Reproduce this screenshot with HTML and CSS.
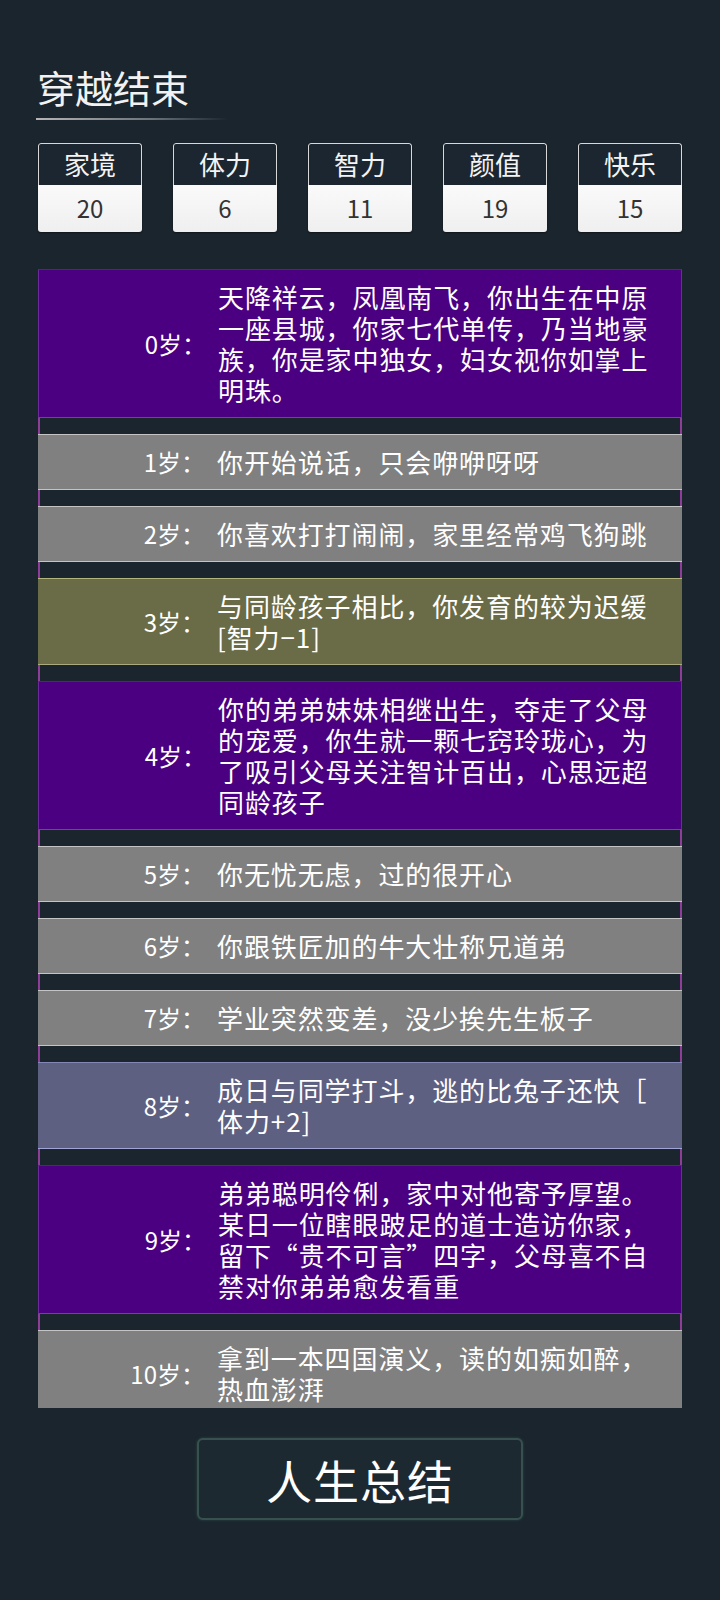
FILE: index.html
```html
<!DOCTYPE html>
<html lang="zh-CN">
<head>
    <meta charset="UTF-8">
    <meta name="viewport" content="width=device-width, initial-scale=1.0">
    <title>穿越结束</title>
    <link rel="stylesheet" href="styles.css">
</head>
<body>
    <div class="page">
        <div class="title">
            <h1>穿越结束</h1>
            <div class="title-line"></div>
        </div>

        <div class="stats">
            <div class="stat">
                <div class="stat-name">家境</div>
                <div class="stat-value">20</div>
            </div>
            <div class="stat">
                <div class="stat-name">体力</div>
                <div class="stat-value">6</div>
            </div>
            <div class="stat">
                <div class="stat-name">智力</div>
                <div class="stat-value">11</div>
            </div>
            <div class="stat">
                <div class="stat-name">颜值</div>
                <div class="stat-value">19</div>
            </div>
            <div class="stat">
                <div class="stat-name">快乐</div>
                <div class="stat-value">15</div>
            </div>
        </div>

        <ul class="events">
            <li class="event grade-rare">
                <span class="age">0岁：</span>
                <span class="text">天降祥云，凤凰南飞，你出生在中原一座县城，你家七代单传，乃当地豪族，你是家中独女，妇女视你如掌上明珠。</span>
            </li>
            <li class="event">
                <span class="age">1岁：</span>
                <span class="text">你开始说话，只会咿咿呀呀</span>
            </li>
            <li class="event">
                <span class="age">2岁：</span>
                <span class="text">你喜欢打打闹闹，家里经常鸡飞狗跳</span>
            </li>
            <li class="event grade-bad">
                <span class="age">3岁：</span>
                <span class="text">与同龄孩子相比，你发育的较为迟缓[智力−1]</span>
            </li>
            <li class="event grade-rare">
                <span class="age">4岁：</span>
                <span class="text">你的弟弟妹妹相继出生，夺走了父母的宠爱，你生就一颗七窍玲珑心，为了吸引父母关注智计百出，心思远超同龄孩子</span>
            </li>
            <li class="event">
                <span class="age">5岁：</span>
                <span class="text">你无忧无虑，过的很开心</span>
            </li>
            <li class="event">
                <span class="age">6岁：</span>
                <span class="text">你跟铁匠加的牛大壮称兄道弟</span>
            </li>
            <li class="event">
                <span class="age">7岁：</span>
                <span class="text">学业突然变差，没少挨先生板子</span>
            </li>
            <li class="event grade-good">
                <span class="age">8岁：</span>
                <span class="text">成日与同学打斗，逃的比兔子还快［体力+2]</span>
            </li>
            <li class="event grade-rare">
                <span class="age">9岁：</span>
                <span class="text">弟弟聪明伶俐，家中对他寄予厚望。某日一位瞎眼跛足的道士造访你家，留下“贵不可言”四字，父母喜不自禁对你弟弟愈发看重</span>
            </li>
            <li class="event">
                <span class="age">10岁：</span>
                <span class="text">拿到一本四国演义，读的如痴如醉，热血澎湃</span>
            </li>
        </ul>

        <div class="actions">
            <button class="btn-summary">人生总结</button>
        </div>
    </div>
</body>
</html>
```

FILE: styles.css
```css
* {
    margin: 0;
    padding: 0;
    box-sizing: border-box;
}

body {
    font-family: "Noto Sans CJK SC", "Noto Sans", sans-serif;
    background: #1b252d;
    color: white;
    min-height: 100vh;
}

.page {
    padding: 64px 38px 0;
}

/* 标题 */
.title h1 {
    font-size: 38px;
    font-weight: 400;
    line-height: 46px;
    color: #f2f2f2;
    margin-left: -1px;
}

.title-line {
    width: 192px;
    height: 2px;
    margin: 8px 0 0 -2px;
    background: linear-gradient(to right, #b5b5b5, #6c7379 60%, rgba(108,115,121,0));
}

/* 属性 */
.stats {
    display: flex;
    justify-content: space-between;
    margin-top: 23px;
}

.stat {
    width: 104px;
    border-radius: 3px;
    overflow: hidden;
    box-shadow: 0 1px 2px rgba(0,0,0,0.4);
}

.stat-name {
    height: 42px;
    line-height: 40px;
    text-align: center;
    font-size: 26px;
    color: #f4f4f4;
    background: #1c2630;
    border: 1px solid #d8d8d8;
    border-bottom: none;
    border-radius: 3px 3px 0 0;
}

.stat-value {
    height: 47px;
    line-height: 46px;
    text-align: center;
    font-size: 24px;
    color: #333;
    background: linear-gradient(#fafafa, #efefef);
}

/* 经历列表 */
.events {
    list-style: none;
    margin-top: 37px;
    height: 1139px;
    overflow-y: auto;
    scrollbar-width: none;
    background: linear-gradient(to right,
        #8d3f98 0, #8d3f98 2px,
        transparent 2px, transparent calc(100% - 2px),
        #8d3f98 calc(100% - 2px), #8d3f98 100%);
}

.events::-webkit-scrollbar {
    display: none;
}

.event {
    display: grid;
    grid-template-columns: 167px 1fr;
    column-gap: 12px;
    align-items: center;
    padding: 11px 30px 12px 0;
    margin-bottom: 16px;
    background: #808080;
    border-top: 1px solid #c4c4c4;
    border-bottom: 1px solid #c4c4c4;
}

.event:last-child {
    margin-bottom: 0;
}

.age {
    text-align: right;
    font-size: 24px;
    line-height: 31px;
    white-space: nowrap;
}

.text {
    font-size: 26px;
    line-height: 31px;
    letter-spacing: 0.9px;
    line-break: anywhere;
}

.grade-rare {
    background: #4a0081;
    border-top-color: #5a1c93;
    border-bottom-color: #7a3aa8;
    border-left: 1px solid #6a2a9c;
    border-right: 1px solid #6a2a9c;
}

.grade-bad {
    background: #6a6b47;
    border-top-color: #b3b37c;
    border-bottom-color: #a9aa80;
}

.grade-good {
    background: #5e6082;
    border-top-color: #8486b8;
    border-bottom-color: #a2a4d8;
}

/* 按钮 */
.actions {
    display: flex;
    justify-content: center;
    padding-top: 30px;
}

.btn-summary {
    width: 326px;
    height: 82px;
    font-family: inherit;
    font-size: 46px;
    color: white;
    background: #1d2931;
    border: 2px solid #37514f;
    border-radius: 6px;
    box-shadow: 0 0 3px rgba(80,140,130,0.35);
    letter-spacing: 1px;
}
```
